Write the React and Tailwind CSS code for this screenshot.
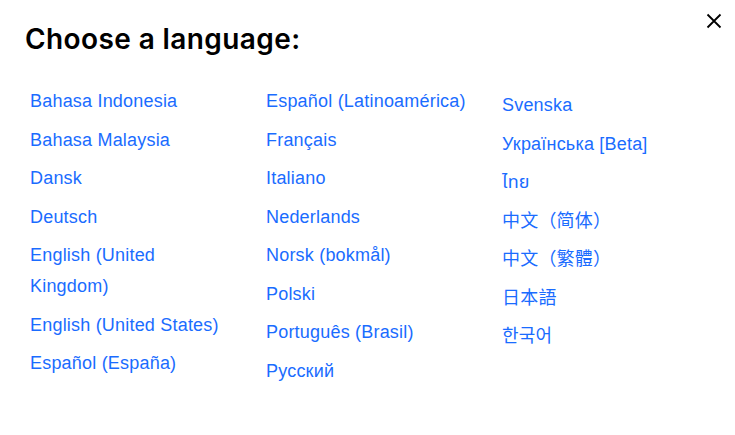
const COLUMNS = [
  [
    "Bahasa Indonesia",
    "Bahasa Malaysia",
    "Dansk",
    "Deutsch",
    "English (United Kingdom)",
    "English (United States)",
    "Español (España)",
  ],
  [
    "Español (Latinoamérica)",
    "Français",
    "Italiano",
    "Nederlands",
    "Norsk (bokmål)",
    "Polski",
    "Português (Brasil)",
    "Русский",
  ],
  ["Svenska", "Українська [Beta]", "ไทย", "中文（简体）", "中文（繁體）", "日本語", "한국어"],
];

function CloseIcon() {
  return (
    <svg width="16" height="16" viewBox="0 0 16 16" fill="none" stroke="currentColor" strokeWidth="1.8">
      <path d="M1.5 1.5l13 13M14.5 1.5l-13 13" />
    </svg>
  );
}

export default function App() {
  return (
    <div className="relative w-[735px] h-[435px] bg-white px-[25px] pt-[25px]" style={{ fontFamily: '"Liberation Sans", "Noto Sans Thai", "Noto Sans CJK SC", sans-serif' }}>
      <button className="absolute right-[13px] top-[13px] text-black">
        <CloseIcon />
      </button>

      <h2 className="text-[28px] leading-[28px] font-semibold text-black tracking-[0.4px]" style={{ fontFamily: "Inter, sans-serif" }}>
        Choose a language:
      </h2>

      <div className="grid grid-cols-[236px_236px_200px] ml-[5px] mt-[33px]">
        {COLUMNS.map((col, ci) => (
          <ul key={ci} className={`flex flex-col gap-[7.5px] ${ci === 2 ? "pt-[4px]" : ""}`}>
            {col.map((lang) => (
              <li key={lang} className="max-w-[204px]">
                <a href="#" className="text-[18px] leading-[31px] tracking-[0.2px] text-[#1a6cff]">
                  {lang}
                </a>
              </li>
            ))}
          </ul>
        ))}
      </div>
    </div>
  );
}
